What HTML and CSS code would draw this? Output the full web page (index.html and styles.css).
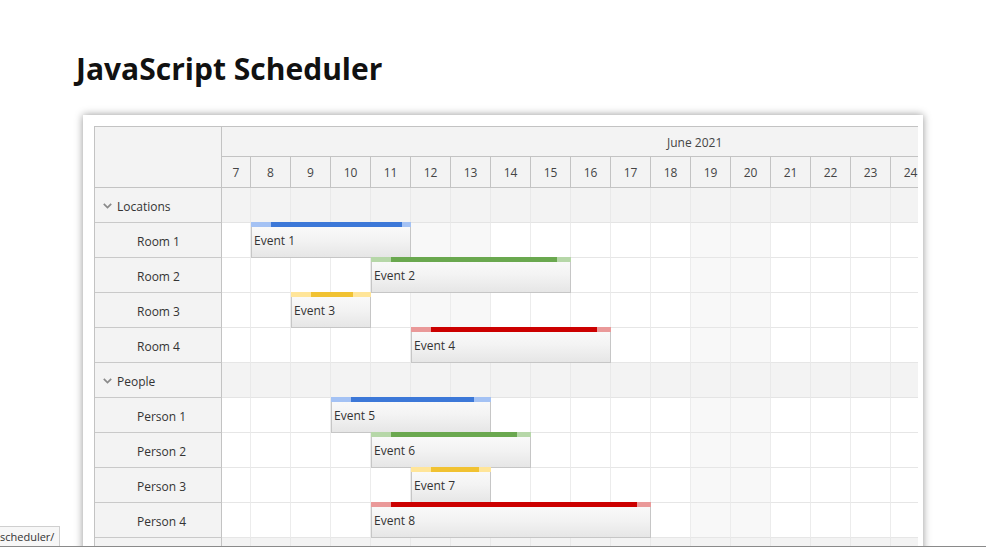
FILE: index.html
```html
<!DOCTYPE html>
<html lang="en">
<head>
<meta charset="utf-8">
<title>JavaScript Scheduler</title>
<link rel="stylesheet" href="styles.css">
</head>
<body>
<div class="page">
  <h1 class="title">JavaScript Scheduler</h1>
  <div class="card">
    <div class="scheduler">
      <div class="hdr">
        <div class="corner"></div>
        <div class="hdr-tl">
          <div class="month"><span class="month-text">June 2021</span></div>
          <div class="days">
            <div class="day f">7</div><div class="day">8</div><div class="day">9</div><div class="day">10</div><div class="day">11</div><div class="day">12</div><div class="day">13</div><div class="day">14</div><div class="day">15</div><div class="day">16</div><div class="day">17</div><div class="day">18</div><div class="day">19</div><div class="day">20</div><div class="day">21</div><div class="day">22</div><div class="day">23</div><div class="day">24</div>
          </div>
        </div>
      </div>

      <div class="row group">
        <div class="label"><svg class="chev" width="9" height="6" viewBox="0 0 9 6"><polyline points="0.8,0.8 4.5,4.6 8.2,0.8" fill="none" stroke="#8a8a8a" stroke-width="1.7"/></svg>Locations</div>
        <div class="cells"><div class="c f"></div><div class="c"></div><div class="c"></div><div class="c"></div><div class="c"></div><div class="c"></div><div class="c"></div><div class="c"></div><div class="c"></div><div class="c"></div><div class="c"></div><div class="c"></div><div class="c"></div><div class="c"></div><div class="c"></div><div class="c"></div><div class="c"></div><div class="c"></div></div>
      </div>

      <div class="row">
        <div class="label res">Room 1</div>
        <div class="cells"><div class="c f"></div><div class="c"></div><div class="c"></div><div class="c"></div><div class="c"></div><div class="c w"></div><div class="c w"></div><div class="c"></div><div class="c"></div><div class="c"></div><div class="c"></div><div class="c"></div><div class="c w"></div><div class="c w"></div><div class="c"></div><div class="c"></div><div class="c"></div><div class="c"></div>
          <div class="event" style="left:29px;width:160px"><div class="bar blue"><div class="done" style="width:131px"></div></div>Event 1</div>
        </div>
      </div>

      <div class="row">
        <div class="label res">Room 2</div>
        <div class="cells"><div class="c f"></div><div class="c"></div><div class="c"></div><div class="c"></div><div class="c"></div><div class="c w"></div><div class="c w"></div><div class="c"></div><div class="c"></div><div class="c"></div><div class="c"></div><div class="c"></div><div class="c w"></div><div class="c w"></div><div class="c"></div><div class="c"></div><div class="c"></div><div class="c"></div>
          <div class="event" style="left:149px;width:200px"><div class="bar green"><div class="done" style="width:166px"></div></div>Event 2</div>
        </div>
      </div>

      <div class="row">
        <div class="label res">Room 3</div>
        <div class="cells"><div class="c f"></div><div class="c"></div><div class="c"></div><div class="c"></div><div class="c"></div><div class="c w"></div><div class="c w"></div><div class="c"></div><div class="c"></div><div class="c"></div><div class="c"></div><div class="c"></div><div class="c w"></div><div class="c w"></div><div class="c"></div><div class="c"></div><div class="c"></div><div class="c"></div>
          <div class="event" style="left:69px;width:80px"><div class="bar yellow"><div class="done" style="width:42px"></div></div>Event 3</div>
        </div>
      </div>

      <div class="row">
        <div class="label res">Room 4</div>
        <div class="cells"><div class="c f"></div><div class="c"></div><div class="c"></div><div class="c"></div><div class="c"></div><div class="c w"></div><div class="c w"></div><div class="c"></div><div class="c"></div><div class="c"></div><div class="c"></div><div class="c"></div><div class="c w"></div><div class="c w"></div><div class="c"></div><div class="c"></div><div class="c"></div><div class="c"></div>
          <div class="event" style="left:189px;width:200px"><div class="bar red"><div class="done" style="width:166px"></div></div>Event 4</div>
        </div>
      </div>

      <div class="row group">
        <div class="label"><svg class="chev" width="9" height="6" viewBox="0 0 9 6"><polyline points="0.8,0.8 4.5,4.6 8.2,0.8" fill="none" stroke="#8a8a8a" stroke-width="1.7"/></svg>People</div>
        <div class="cells"><div class="c f"></div><div class="c"></div><div class="c"></div><div class="c"></div><div class="c"></div><div class="c"></div><div class="c"></div><div class="c"></div><div class="c"></div><div class="c"></div><div class="c"></div><div class="c"></div><div class="c"></div><div class="c"></div><div class="c"></div><div class="c"></div><div class="c"></div><div class="c"></div></div>
      </div>

      <div class="row">
        <div class="label res">Person 1</div>
        <div class="cells"><div class="c f"></div><div class="c"></div><div class="c"></div><div class="c"></div><div class="c"></div><div class="c w"></div><div class="c w"></div><div class="c"></div><div class="c"></div><div class="c"></div><div class="c"></div><div class="c"></div><div class="c w"></div><div class="c w"></div><div class="c"></div><div class="c"></div><div class="c"></div><div class="c"></div>
          <div class="event" style="left:109px;width:160px"><div class="bar blue"><div class="done" style="width:123px"></div></div>Event 5</div>
        </div>
      </div>

      <div class="row">
        <div class="label res">Person 2</div>
        <div class="cells"><div class="c f"></div><div class="c"></div><div class="c"></div><div class="c"></div><div class="c"></div><div class="c w"></div><div class="c w"></div><div class="c"></div><div class="c"></div><div class="c"></div><div class="c"></div><div class="c"></div><div class="c w"></div><div class="c w"></div><div class="c"></div><div class="c"></div><div class="c"></div><div class="c"></div>
          <div class="event" style="left:149px;width:160px"><div class="bar green"><div class="done" style="width:126px"></div></div>Event 6</div>
        </div>
      </div>

      <div class="row">
        <div class="label res">Person 3</div>
        <div class="cells"><div class="c f"></div><div class="c"></div><div class="c"></div><div class="c"></div><div class="c"></div><div class="c w"></div><div class="c w"></div><div class="c"></div><div class="c"></div><div class="c"></div><div class="c"></div><div class="c"></div><div class="c w"></div><div class="c w"></div><div class="c"></div><div class="c"></div><div class="c"></div><div class="c"></div>
          <div class="event" style="left:189px;width:80px"><div class="bar yellow"><div class="done" style="width:48px"></div></div>Event 7</div>
        </div>
      </div>

      <div class="row">
        <div class="label res">Person 4</div>
        <div class="cells"><div class="c f"></div><div class="c"></div><div class="c"></div><div class="c"></div><div class="c"></div><div class="c w"></div><div class="c w"></div><div class="c"></div><div class="c"></div><div class="c"></div><div class="c"></div><div class="c"></div><div class="c w"></div><div class="c w"></div><div class="c"></div><div class="c"></div><div class="c"></div><div class="c"></div>
          <div class="event" style="left:149px;width:280px"><div class="bar red"><div class="done" style="width:246px"></div></div>Event 8</div>
        </div>
      </div>

      <div class="row group">
        <div class="label"></div>
        <div class="cells"><div class="c f"></div><div class="c"></div><div class="c"></div><div class="c"></div><div class="c"></div><div class="c"></div><div class="c"></div><div class="c"></div><div class="c"></div><div class="c"></div><div class="c"></div><div class="c"></div><div class="c"></div><div class="c"></div><div class="c"></div><div class="c"></div><div class="c"></div><div class="c"></div></div>
      </div>
    </div>
  </div>
</div>
<div class="status">scheduler/</div>
<div class="edge"></div>
</body>
</html>
```

FILE: styles.css
```css
html, body {
  margin: 0;
  padding: 0;
  height: 547px;
  overflow: hidden;
  background: #fff;
}

body {
  font-family: "Open Sans", "Liberation Sans", sans-serif;
  color: #333;
}

.page {
  padding-left: 76px;
}

.title {
  margin: 49px 0 0 0;
  font-size: 30px;
  line-height: 40px;
  font-weight: 700;
  color: #111;
}

.card {
  margin: 26px 0 0 7px;
  width: 840px;
  height: 600px;
  box-sizing: border-box;
  padding: 11px 5px 0 11px;
  background: #fff;
  box-shadow: 0 0 8px rgba(0, 0, 0, 0.42);
}

.scheduler {
  width: 824px;
  box-sizing: border-box;
  border-top: 1px solid #c3c3c3;
  border-left: 1px solid #c3c3c3;
  overflow: hidden;
  font-size: 12px;
  color: #333;
}

.hdr {
  display: flex;
  border-bottom: 1px solid #c3c3c3;
  background: #f3f3f3;
}

.corner {
  flex: none;
  width: 127px;
  box-sizing: border-box;
  border-right: 1px solid #c3c3c3;
}

.hdr-tl {
  flex: none;
}

.month {
  height: 30px;
  box-sizing: border-box;
  border-bottom: 1px solid #c3c3c3;
  padding-top: 2px;
  line-height: 27px;
  padding-left: 445px;
  color: #444;
}

.days {
  display: flex;
  height: 30px;
}

.day {
  flex: none;
  width: 40px;
  box-sizing: border-box;
  border-right: 1px solid #c3c3c3;
  text-align: center;
  padding-top: 2px;
  line-height: 28px;
  color: #444;
}

.day.f {
  width: 29px;
}

.row {
  display: flex;
  height: 35px;
}

.label {
  flex: none;
  width: 127px;
  box-sizing: border-box;
  border-right: 1px solid #c3c3c3;
  border-bottom: 1px solid #c9c9c9;
  background: #f3f3f3;
  display: flex;
  align-items: center;
  padding: 2px 0 0 8px;
  color: #333;
}

.label.res {
  padding-left: 42px;
}

.chev {
  flex: none;
  margin-right: 5px;
  margin-top: -1px;
}

.cells {
  flex: none;
  display: flex;
  position: relative;
}

.c {
  flex: none;
  width: 40px;
  height: 35px;
  box-sizing: border-box;
  border-right: 1px solid #ececec;
  border-bottom: 1px solid #e6e6e6;
  background: #fff;
}

.c.f {
  width: 29px;
}

.c.w {
  background: #f8f8f8;
}

.group .c {
  background: #f3f3f3;
  border-right-color: #e9e9e9;
  border-bottom-color: #e4e4e4;
}

.event {
  position: absolute;
  top: -1px;
  height: 36px;
  box-sizing: border-box;
  border: 1px solid #c6c6c6;
  background: linear-gradient(to bottom, #fbfbfb 0%, #f3f3f3 50%, #e6e6e6 100%);
  padding: 10px 0 0 2px;
  line-height: 16px;
  color: #333;
  white-space: nowrap;
}

.bar {
  position: absolute;
  top: -1px;
  left: -1px;
  right: -1px;
  height: 5px;
}

.done {
  position: absolute;
  top: 0;
  bottom: 0;
  left: 20px;
}

.bar.blue { background: #a4c2f4; }
.bar.blue .done { background: #3c78d8; }
.bar.green { background: #b6d7a8; }
.bar.green .done { background: #6aa84f; }
.bar.yellow { background: #ffe599; }
.bar.yellow .done { background: #f1c232; }
.bar.red { background: #ea9999; }
.bar.red .done { background: #cc0000; }

.status {
  position: fixed;
  left: 0;
  bottom: 0;
  height: 21px;
  box-sizing: border-box;
  padding: 0 5px 0 0;
  border-top: 1px solid #cfcfcf;
  border-right: 1px solid #cfcfcf;
  background: #f7f7f7;
  font-size: 11px;
  line-height: 20px;
  color: #333;
}

.edge {
  position: fixed;
  left: 0;
  right: 0;
  bottom: 0;
  height: 1px;
  background: #8a8a8a;
}
```
